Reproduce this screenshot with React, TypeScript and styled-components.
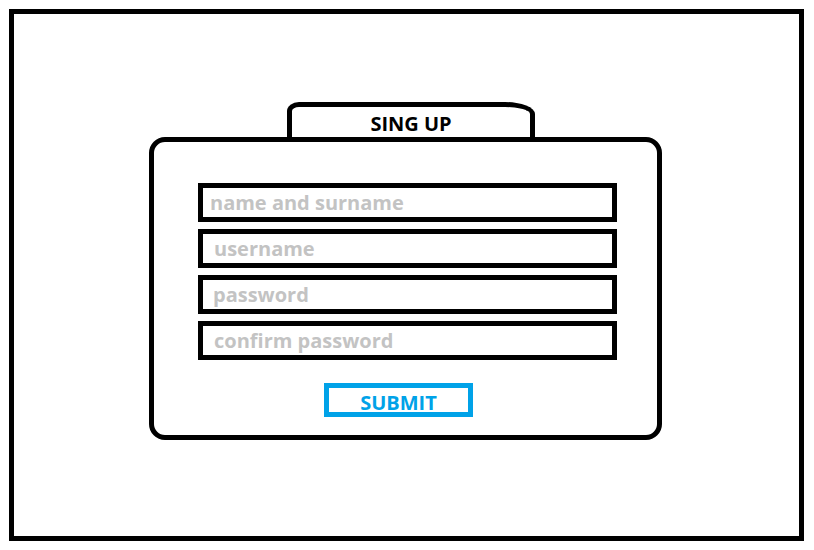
import React from "react";
import styled, { createGlobalStyle } from "styled-components";

const Global = createGlobalStyle`
  html, body { margin: 0; padding: 0; background: #ffffff; }
  body { font-family: "Open Sans", "Noto Sans", sans-serif; }
  * { box-sizing: border-box; }
`;

const Frame = styled.div`
  margin: 9px;
  width: 795px;
  height: 532px;
  border: 5px solid #000;
  display: flex;
  flex-direction: column;
  align-items: flex-start;
  padding: 88px 0 0 135px;
  background: #fff;
`;

const Tab = styled.div`
  margin-left: 138px;
  width: 248px;
  height: 40px;
  border: 5px solid #000;
  border-bottom: none;
  border-top-left-radius: 12px 9px;
  border-top-right-radius: 30px 12px;
  display: flex;
  justify-content: center;
  padding-top: 5px;
  font-weight: 700;
  font-size: 20px;
  line-height: 24px;
  color: #000;
`;

const Card = styled.form`
  margin-top: -5px;
  width: 513px;
  height: 303px;
  border: 5px solid #000;
  border-radius: 16px;
  background: #fff;
  display: flex;
  flex-direction: column;
  padding: 41px 40px 0 44px;
`;

const Fields = styled.div`
  display: flex;
  flex-direction: column;
  gap: 7px;
`;

const Field = styled.input<{ $inset: number }>`
  width: 419px;
  height: 39px;
  border: 5px solid #000;
  border-radius: 0;
  outline: none;
  padding: 0 0 0 ${(p) => p.$inset}px;
  font-family: "Open Sans", "Noto Sans", sans-serif;
  font-weight: 700;
  font-size: 20px;
  color: #000;
  background: #fff;
  &::placeholder {
    color: #c3c3c3;
    opacity: 1;
  }
`;

const Submit = styled.button`
  margin: 23px 0 0 126px;
  width: 149px;
  height: 34px;
  border: 5px solid #00a2e8;
  background: #fff;
  color: #00a2e8;
  font-family: "Open Sans", "Noto Sans", sans-serif;
  font-weight: 700;
  font-size: 20px;
  line-height: 24px;
  padding: 3px 0 0;
  cursor: pointer;
`;

export default function App() {
  return (
    <>
      <Global />
      <Frame>
        <Tab>SING UP</Tab>
        <Card onSubmit={(e) => e.preventDefault()}>
          <Fields>
            <Field $inset={7} placeholder="name and surname" />
            <Field $inset={11} placeholder="username" />
            <Field $inset={10} placeholder="password" />
            <Field $inset={11} type="password" placeholder="confirm password" />
          </Fields>
          <Submit type="submit">SUBMIT</Submit>
        </Card>
      </Frame>
    </>
  );
}
